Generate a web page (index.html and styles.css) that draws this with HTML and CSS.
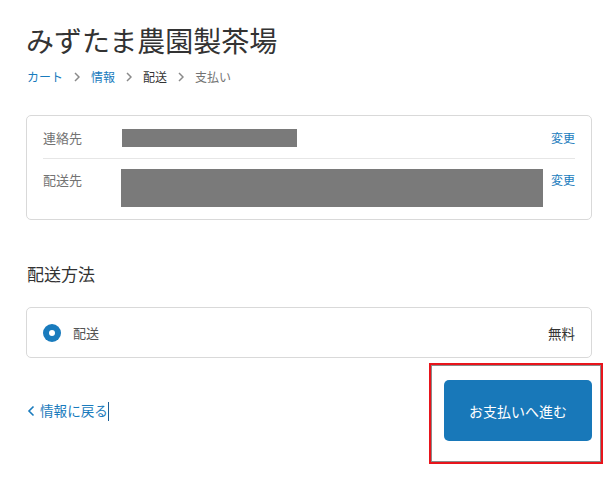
FILE: index.html
```html
<!DOCTYPE html>
<html lang="ja">
<head>
<meta charset="UTF-8" />
<meta name="viewport" content="width=device-width, initial-scale=1" />
<title>配送 - みずたま農園製茶場</title>
<link rel="stylesheet" href="styles.css">
</head>
<body>

<div class="page">
  <h1 class="shop-name">みずたま農園製茶場</h1>

  <nav class="crumbs">
    <a href="#">カート</a>
    <svg class="sep" width="6" height="10" viewBox="0 0 6 10"><path d="M1 1 L5 5 L1 9" fill="none" stroke="currentColor" stroke-width="1.5"/></svg>
    <a href="#">情報</a>
    <svg class="sep" width="6" height="10" viewBox="0 0 6 10"><path d="M1 1 L5 5 L1 9" fill="none" stroke="currentColor" stroke-width="1.5"/></svg>
    <span class="current">配送</span>
    <svg class="sep" width="6" height="10" viewBox="0 0 6 10"><path d="M1 1 L5 5 L1 9" fill="none" stroke="currentColor" stroke-width="1.5"/></svg>
    <span class="todo">支払い</span>
  </nav>

  <div class="review">
    <div class="review-row">
      <div class="review-label">連絡先</div>
      <div class="review-value"><div class="mask mask-short"></div></div>
      <a class="review-link" href="#">変更</a>
    </div>
    <div class="review-row">
      <div class="review-label">配送先</div>
      <div class="review-value"><div class="mask mask-long"></div></div>
      <a class="review-link" href="#">変更</a>
    </div>
  </div>

  <h2 class="section-title">配送方法</h2>

  <div class="rates">
    <label class="rate">
      <span class="radio"></span>
      <span class="rate-name">配送</span>
      <span class="rate-price">無料</span>
    </label>
  </div>

  <div class="steps">
    <a class="back" href="#">
      <svg width="9" height="12" viewBox="0 0 9 12"><path d="M6.5 1.5 L2 6 L6.5 10.5" fill="none" stroke="currentColor" stroke-width="1.6"/></svg>
      <span>情報に戻る<span class="caret"></span></span>
    </a>
    <div class="continue-wrap">
      <button class="continue">お支払いへ進む</button>
      <div class="highlight"></div>
    </div>
  </div>
</div>

</body>
</html>
```

FILE: styles.css
```css
body {
  margin: 0;
  background: #fff;
  color: #333;
  font-family: "Noto Sans CJK JP", "Noto Sans", sans-serif;
}
a {
  text-decoration: none;
  color: #197bbd;
}
.page {
  width: 566px;
  padding: 22px 0 40px 26px;
}
.shop-name {
  margin: 0;
  font-size: 28px;
  font-weight: normal;
  line-height: 36px;
  color: #333;
}
.crumbs {
  margin-top: 10px;
  display: flex;
  align-items: center;
  gap: 11px;
  font-size: 12px;
  line-height: 18px;
  padding-left: 1px;
}
.crumbs .sep {
  color: #8a8a8a;
}
.crumbs .current { color: #333; }
.crumbs .todo { color: #737373; }

.review {
  margin-top: 29px;
  border: 1px solid #d9d9d9;
  border-radius: 5px;
  padding: 0 16px;
}
.review-row {
  display: flex;
  align-items: flex-start;
  padding: 13px 0 11px;
  font-size: 13px;
  line-height: 18px;
}
.review-row + .review-row {
  border-top: 1px solid #e6e6e6;
  padding: 10px 0 12px;
}
.review-label {
  width: 78px;
  flex: none;
  color: #737373;
}
.review-row + .review-row .review-label,
.review-row + .review-row .review-link {
  padding-top: 2px;
}
.review-value {
  flex: 1;
  padding-right: 8px;
}
.mask {
  background: #7a7a7a;
}
.mask-short {
  width: 175px;
  height: 18px;
  margin-left: 1px;
}
.mask-long {
  height: 38px;
}
.review-link {
  font-size: 12px;
  flex: none;
}

.section-title {
  margin: 42px 0 0 1px;
  font-size: 17px;
  font-weight: normal;
  line-height: 24px;
  color: #333;
}
.rates {
  margin-top: 21px;
  border: 1px solid #d9d9d9;
  border-radius: 5px;
  padding: 0 16px;
}
.rate {
  display: flex;
  align-items: center;
  height: 49px;
  font-size: 13px;
}
.radio {
  width: 18px;
  height: 18px;
  border-radius: 50%;
  background: #197bbd;
  position: relative;
  margin-right: 12px;
}
.radio::after {
  content: "";
  position: absolute;
  left: 6px;
  top: 6px;
  width: 6px;
  height: 6px;
  border-radius: 50%;
  background: #fff;
}
.rate-name {
  flex: 1;
  color: #545454;
}
.rate-price {
  color: #333;
  font-size: 13.5px;
}

.steps {
  margin-top: 22px;
  display: flex;
  justify-content: space-between;
  align-items: center;
}
.back {
  display: flex;
  align-items: center;
  gap: 4px;
  font-size: 13.6px;
  padding-left: 1px;
}
.caret {
  display: inline-block;
  width: 1px;
  height: 19px;
  background: #1a5e96;
  vertical-align: middle;
}
.continue-wrap {
  position: relative;
}
.continue {
  display: block;
  width: 148px;
  height: 61px;
  border: none;
  border-radius: 5px;
  background: #1878b9;
  color: #fff;
  font-family: inherit;
  font-size: 14px;
  cursor: pointer;
}
.highlight {
  position: absolute;
  left: -15px;
  top: -17px;
  width: 170px;
  height: 97px;
  border: 2px solid #e8141b;
  box-shadow: inset 0 0 0 1px #8a8a8a;
}
```
